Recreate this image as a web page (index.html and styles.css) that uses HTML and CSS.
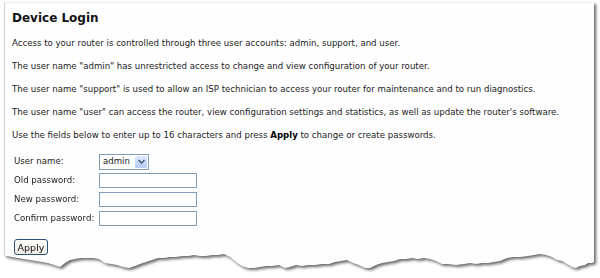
FILE: index.html
```html
<!DOCTYPE html>
<html>
<head>
<meta charset="utf-8">
<link rel="stylesheet" href="styles.css">
</head>
<body>
<div class="frame">
  <div class="panel">
    <h1 class="title">Device Login</h1>
    <p class="txt">Access to your router is controlled through three user accounts: admin, support, and user.</p>
    <p class="txt">The user name "admin" has unrestricted access to change and view configuration of your router.</p>
    <p class="txt">The user name "support" is used to allow an ISP technician to access your router for maintenance and to run diagnostics.</p>
    <p class="txt">The user name "user" can access the router, view configuration settings and statistics, as well as update the router's software.</p>
    <p class="txt">Use the fields below to enter up to 16 characters and press <b>Apply</b> to change or create passwords.</p>
    <div class="form">
      <label class="lbl">User name:</label>
      <div class="sel"><span class="sel-val">admin</span><span class="sel-btn"><svg width="9" height="7" viewBox="0 0 9 7"><path d="M1.5 2 L4.5 5 L7.5 2" fill="none" stroke="#4d6185" stroke-width="1.6"/></svg></span></div>
      <label class="lbl">Old password:</label>
      <input class="inp" type="password">
      <label class="lbl">New password:</label>
      <input class="inp" type="password">
      <label class="lbl">Confirm password:</label>
      <input class="inp" type="password">
    </div>
    <button class="btn">Apply</button>
  </div>
</div>
</body>
</html>
```
FILE: styles.css
```css
html, body {
  margin: 0;
  padding: 0;
  background: #ffffff;
}
.frame {
  padding: 2px 6px 6px 4px;
  filter: drop-shadow(2px 2px 1.5px rgba(0,0,0,0.6));
}
.panel {
  box-sizing: border-box;
  width: 590px;
  height: 270px;
  background: #fefefe;
  border-left: 1px solid #d4d4d4;
  border-top: 1px solid #ececec;
  padding: 6px 0 0 7px;
  font-family: "DejaVu Sans", Verdana, sans-serif;
  color: #222;
  clip-path: polygon(0 0, 590px 0, 590px 260px, 588px 261px, 584px 261px, 581px 263px, 576px 264px, 572px 266px, 568px 265px, 563px 262px, 558px 259px, 553px 258px, 548px 255px, 542px 253px, 536px 252px, 530px 253px, 524px 254px, 516px 255px, 510px 255px, 503px 256px, 496px 259px, 490px 260px, 484px 261px, 478px 261px, 472px 262px, 466px 261px, 460px 262px, 452px 263px, 444px 262px, 438px 262px, 432px 259px, 426px 257px, 420px 256px, 414px 257px, 408px 256px, 402px 257px, 396px 257px, 390px 259px, 384px 260px, 378px 261px, 372px 263px, 366px 266px, 361px 266px, 355px 263px, 349px 261px, 343px 258px, 337px 259px, 331px 260px, 325px 262px, 318px 262px, 311px 263px, 304px 263px, 298px 264px, 292px 263px, 286px 265px, 281px 266px, 275px 263px, 268px 264px, 262px 264px, 256px 265px, 250px 266px, 244px 266px, 238px 264px, 232px 260px, 226px 255px, 220px 252px, 214px 253px, 208px 253px, 202px 254px, 196px 254px, 190px 253px, 184px 254px, 178px 254px, 172px 255px, 166px 255px, 160px 256px, 154px 256px, 148px 258px, 142px 260px, 136px 262px, 131px 264px, 125px 266px, 119px 265px, 113px 263px, 107px 262px, 101px 261px, 95px 257px, 89px 256px, 83px 256px, 77px 256px, 71px 257px, 66px 258px, 61px 261px, 56px 265px, 50px 263px, 44px 261px, 38px 260px, 32px 259px, 26px 258px, 20px 257px, 14px 256px, 8px 255px, 3px 254px, 0 253px);
}
.title {
  margin: 0;
  font-size: 12px;
  line-height: 18px;
  font-weight: bold;
  color: #111;
}
.txt {
  margin: 12px 0 0 0;
  font-size: 8.6px;
  line-height: 11px;
  white-space: nowrap;
}
.title + .txt {
  margin-top: 11px;
}
.txt b {
  color: #000;
}
.form {
  display: grid;
  grid-template-columns: 85px auto;
  grid-auto-rows: 19px;
  align-items: center;
  justify-items: start;
  margin: 11px 0 0 2px;
}
.lbl {
  font-size: 8.6px;
  line-height: 11px;
}
.sel {
  display: flex;
  align-items: center;
  box-sizing: border-box;
  width: 50px;
  height: 16px;
  border: 1px solid #7f9db9;
  background: #fff;
}
.sel-val {
  flex: 1;
  padding-left: 3px;
  font-size: 8.6px;
  line-height: 11px;
}
.sel-btn {
  display: flex;
  align-items: center;
  justify-content: center;
  width: 12px;
  height: 12px;
  margin-right: 1px;
  background: linear-gradient(#dfe8fb, #b8cbf4);
  border-radius: 1px;
}
.inp {
  box-sizing: border-box;
  width: 98px;
  height: 15px;
  margin: 0;
  padding: 0;
  border: 1px solid #7f9db9;
  background: #fff;
}
.btn {
  display: block;
  box-sizing: border-box;
  margin: 11px 0 0 2px;
  width: 34px;
  height: 16px;
  padding: 0;
  border: 1px solid #2d4f7c;
  border-radius: 3px;
  background: linear-gradient(#ffffff, #ece9df);
  font-family: "DejaVu Sans", Verdana, sans-serif;
  font-size: 9.5px;
  line-height: 13px;
  color: #111;
}
```
